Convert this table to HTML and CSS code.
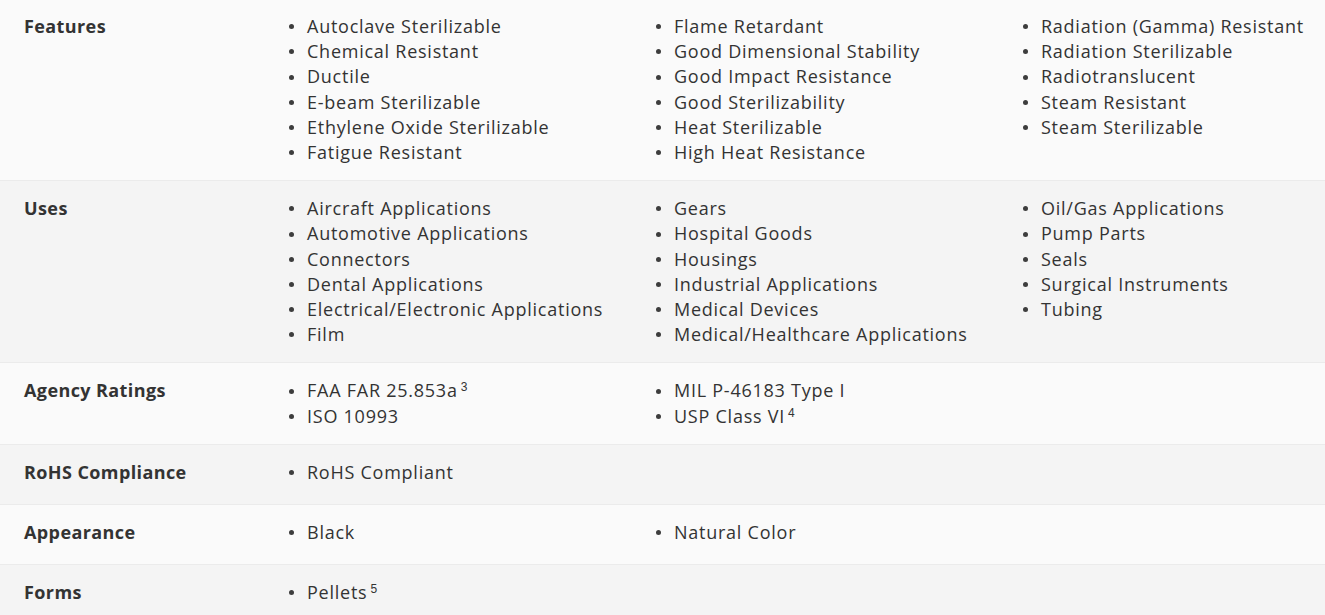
FILE: index.html
```html
<!DOCTYPE html>
<html lang="en">
<head>
<meta charset="utf-8">
<title>Properties</title>
<link rel="stylesheet" href="styles.css">
</head>
<body>
<div class="table">
  <div class="row odd first">
    <div class="label">Features</div>
    <div class="values">
      <ul class="col">
        <li>Autoclave Sterilizable</li>
        <li>Chemical Resistant</li>
        <li>Ductile</li>
        <li>E-beam Sterilizable</li>
        <li>Ethylene Oxide Sterilizable</li>
        <li>Fatigue Resistant</li>
      </ul>
      <ul class="col">
        <li>Flame Retardant</li>
        <li>Good Dimensional Stability</li>
        <li>Good Impact Resistance</li>
        <li>Good Sterilizability</li>
        <li>Heat Sterilizable</li>
        <li>High Heat Resistance</li>
      </ul>
      <ul class="col">
        <li>Radiation (Gamma) Resistant</li>
        <li>Radiation Sterilizable</li>
        <li>Radiotranslucent</li>
        <li>Steam Resistant</li>
        <li>Steam Sterilizable</li>
      </ul>
    </div>
  </div>
  <div class="row even">
    <div class="label">Uses</div>
    <div class="values">
      <ul class="col">
        <li>Aircraft Applications</li>
        <li>Automotive Applications</li>
        <li>Connectors</li>
        <li>Dental Applications</li>
        <li>Electrical/Electronic Applications</li>
        <li>Film</li>
      </ul>
      <ul class="col">
        <li>Gears</li>
        <li>Hospital Goods</li>
        <li>Housings</li>
        <li>Industrial Applications</li>
        <li>Medical Devices</li>
        <li>Medical/Healthcare Applications</li>
      </ul>
      <ul class="col">
        <li>Oil/Gas Applications</li>
        <li>Pump Parts</li>
        <li>Seals</li>
        <li>Surgical Instruments</li>
        <li>Tubing</li>
      </ul>
    </div>
  </div>
  <div class="row odd">
    <div class="label">Agency Ratings</div>
    <div class="values">
      <ul class="col">
        <li><span>FAA FAR 25.853a</span><sup>3</sup></li>
        <li>ISO 10993</li>
      </ul>
      <ul class="col">
        <li>MIL P-46183 Type I</li>
        <li><span>USP Class VI</span><sup>4</sup></li>
      </ul>
    </div>
  </div>
  <div class="row even">
    <div class="label">RoHS Compliance</div>
    <div class="values">
      <ul class="col">
        <li>RoHS Compliant</li>
      </ul>
    </div>
  </div>
  <div class="row odd">
    <div class="label">Appearance</div>
    <div class="values">
      <ul class="col">
        <li>Black</li>
      </ul>
      <ul class="col">
        <li>Natural Color</li>
      </ul>
    </div>
  </div>
  <div class="row even">
    <div class="label">Forms</div>
    <div class="values">
      <ul class="col">
        <li><span>Pellets</span><sup>5</sup></li>
      </ul>
    </div>
  </div>
</div>
</body>
</html>
```

FILE: styles.css
```css
html, body {
  margin: 0;
  padding: 0;
}

body {
  background: #f4f4f4;
  color: #333333;
  font-family: "Open Sans", "Liberation Sans", sans-serif;
  overflow: hidden;
}

.table {
  width: 1325px;
}

.row {
  display: flex;
  align-items: flex-start;
  padding: 15px 0;
  border-bottom: 1px solid #ebebeb;
}

.row.first {
  padding-top: 14px;
}

.row.odd {
  background: #fafafa;
}

.row.even {
  background: #f4f4f4;
}

.label {
  width: 289px;
  flex: none;
  box-sizing: border-box;
  padding-left: 24px;
  font-size: 18px;
  font-weight: 700;
  letter-spacing: 0.4px;
  line-height: 29px;
  margin-top: -2px;
  margin-bottom: 2px;
  color: #333333;
}

.values {
  display: grid;
  grid-template-columns: repeat(3, 367px);
  align-items: start;
}

.col {
  list-style: none;
  margin: 0;
  padding: 0;
}

.col li {
  display: flex;
  align-items: center;
  font-size: 18px;
  letter-spacing: 0.75px;
  line-height: 25.2px;
  white-space: nowrap;
  color: #333333;
}

.col li::before {
  content: "";
  flex: none;
  width: 5px;
  height: 5px;
  border-radius: 50%;
  background: #3d3d3d;
  margin-right: 13px;
}

sup {
  align-self: flex-start;
  font-family: "Liberation Sans", Arial, sans-serif;
  font-size: 12px;
  letter-spacing: 0;
  line-height: 12px;
  margin-left: 3px;
  margin-top: 3px;
  vertical-align: baseline;
}
```
